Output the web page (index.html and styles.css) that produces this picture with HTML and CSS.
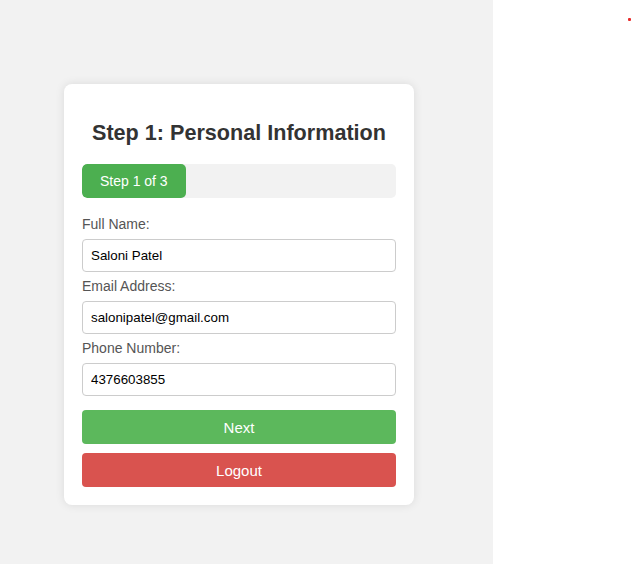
FILE: index.html
```html
<!DOCTYPE html>
<html lang="en">
<head>
<meta charset="utf-8">
<title>Step 1: Personal Information</title>
<link rel="stylesheet" href="styles.css">
</head>
<body>
<div class="page">
  <main class="left">
    <form class="card">
      <h2 class="title">Step 1: Personal Information</h2>
      <div class="progress"><div class="progress-fill" style="width:33%">Step 1 of 3</div></div>
      <label class="label" for="name">Full Name:</label>
      <input class="input" id="name" type="text" value="Saloni Patel">
      <label class="label" for="email">Email Address:</label>
      <input class="input" id="email" type="email" value="salonipatel@gmail.com">
      <label class="label" for="phone">Phone Number:</label>
      <input class="input" id="phone" type="tel" value="4376603855">
      <button class="btn btn-next" type="button">Next</button>
      <button class="btn btn-logout" type="button">Logout</button>
    </form>
  </main>
  <aside class="right"><span class="dot"></span></aside>
</div>
</body>
</html>
```
FILE: styles.css
```css
* { box-sizing: border-box; }
html, body { margin: 0; padding: 0; height: 100%; }
body { font-family: Arial, "Liberation Sans", sans-serif; background: #fff; }
.page { display: flex; height: 564px; }
.left { width: 493px; background: #f2f2f2; padding: 84px 0 0 64px; }
.right { flex: 1; display: flex; justify-content: flex-end; align-items: flex-start; padding: 18px 3px 0 0; }
.dot { width: 3px; height: 3px; background: #e82a2a; border-radius: 1px; display: block; }
.card { width: 350px; background: #fff; border-radius: 8px; box-shadow: 0 0 10px rgba(0,0,0,0.1); padding: 36px 18px 18px; display: flex; flex-direction: column; }
.title { margin: 0 0 18px; font-size: 21.6px; line-height: 26px; font-weight: bold; color: #333; text-align: center; }
.progress { height: 34px; background: #f2f2f2; border-radius: 5px; overflow: hidden; margin-bottom: 18px; }
.progress-fill { height: 100%; background: #4caf50; color: #fff; font-size: 14px; line-height: 34px; text-align: center; border-radius: 5px; }
.label { display: block; font-size: 14px; line-height: 16px; color: #555; margin-bottom: 7px; }
.input { display: block; width: 100%; height: 33px; padding: 8px; border: 1px solid #ccc; border-radius: 4px; font-family: Arial, "Liberation Sans", sans-serif; font-size: 13.33px; color: #000; margin: 0 0 6px; }
.btn { display: block; width: 100%; height: 34px; border: none; border-radius: 4px; color: #fff; font-family: Arial, "Liberation Sans", sans-serif; font-size: 15px; cursor: pointer; }
.btn-next { background: #5cb85c; margin-top: 8px; }
.btn-logout { background: #d9534f; margin-top: 9px; }
```
